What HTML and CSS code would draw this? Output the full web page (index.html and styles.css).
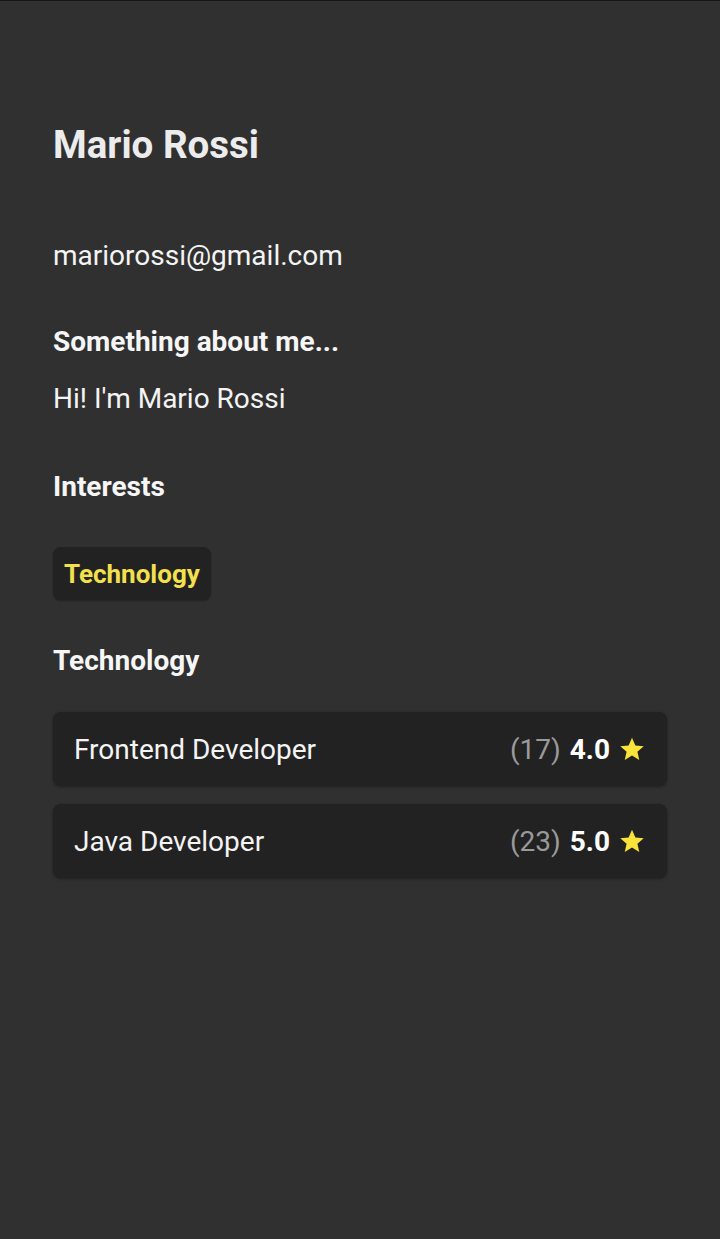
FILE: index.html
```html
<!DOCTYPE html>
<html lang="en">
<head>
<meta charset="utf-8">
<title>Profile</title>
<link rel="stylesheet" href="styles.css">
</head>
<body>
<main class="profile">
  <h1 class="name">Mario Rossi</h1>
  <p class="email">mariorossi@gmail.com</p>
  <h2 class="heading about-heading">Something about me...</h2>
  <p class="about">Hi! I'm Mario Rossi</p>
  <h2 class="heading interests-heading">Interests</h2>
  <div class="chips">
    <span class="chip">Technology</span>
  </div>
  <h2 class="heading category-heading">Technology</h2>
  <ul class="skills">
    <li class="skill">
      <span class="skill-name">Frontend Developer</span>
      <span class="skill-rating">
        <span class="count">(17)</span>
        <span class="score">4.0</span>
        <svg class="star" viewBox="0 0 24 24" width="26" height="26"><path d="M12 1.6l3.1 7.1 7.7.7-5.8 5.1 1.7 7.6L12 18.1l-6.7 4 1.7-7.6-5.8-5.1 7.7-.7z" fill="#fbe33b"/></svg>
      </span>
    </li>
    <li class="skill">
      <span class="skill-name">Java Developer</span>
      <span class="skill-rating">
        <span class="count">(23)</span>
        <span class="score">5.0</span>
        <svg class="star" viewBox="0 0 24 24" width="26" height="26"><path d="M12 1.6l3.1 7.1 7.7.7-5.8 5.1 1.7 7.6L12 18.1l-6.7 4 1.7-7.6-5.8-5.1 7.7-.7z" fill="#fbe33b"/></svg>
      </span>
    </li>
  </ul>
</main>
</body>
</html>
```

FILE: styles.css
```css
html, body {
  margin: 0;
  padding: 0;
}
body {
  background: #303030;
  border-top: 1px solid #151515;
  min-height: 1238px;
  font-family: Roboto, "Noto Sans", "Liberation Sans", sans-serif;
  color: #f4f4f4;
}
.profile {
  padding: 122px 53px 0 53px;
  display: flex;
  flex-direction: column;
}
.name {
  margin: 0;
  font-size: 38.5px;
  line-height: 44px;
  font-weight: 700;
  color: #ececec;
}
.email {
  margin: 73px 0 0;
  font-size: 28px;
  line-height: 32px;
  font-weight: 400;
}
.heading {
  margin: 0;
  font-size: 28px;
  line-height: 32px;
  font-weight: 700;
  color: #f6f6f6;
}
.about-heading { margin-top: 54px; }
.about {
  margin: 25px 0 0;
  font-size: 28px;
  line-height: 32px;
}
.interests-heading { margin-top: 56px; }
.chips {
  margin-top: 44px;
  display: flex;
}
.chip {
  background: #222222;
  border-radius: 8px;
  height: 53px;
  padding: 0 11px;
  display: flex;
  align-items: center;
  font-size: 26px;
  font-weight: 700;
  color: #f3e04d;
  box-shadow: 0 1px 2px rgba(0,0,0,0.3);
}
.category-heading { margin-top: 45px; }
.skills {
  list-style: none;
  margin: 35px 0 0;
  padding: 0;
  display: flex;
  flex-direction: column;
  gap: 18px;
}
.skill {
  background: #222222;
  border-radius: 8px;
  height: 74px;
  padding: 0 22px 0 21px;
  display: flex;
  align-items: center;
  justify-content: space-between;
  box-shadow: 0 1px 3px rgba(0,0,0,0.35);
  font-size: 28px;
}
.skill-name {
  color: #f4f4f4;
}
.skill-rating {
  display: flex;
  align-items: center;
  gap: 9px;
}
.count {
  color: #9a9a9a;
}
.score {
  font-weight: 700;
  color: #ffffff;
}
.star {
  display: block;
}
```
